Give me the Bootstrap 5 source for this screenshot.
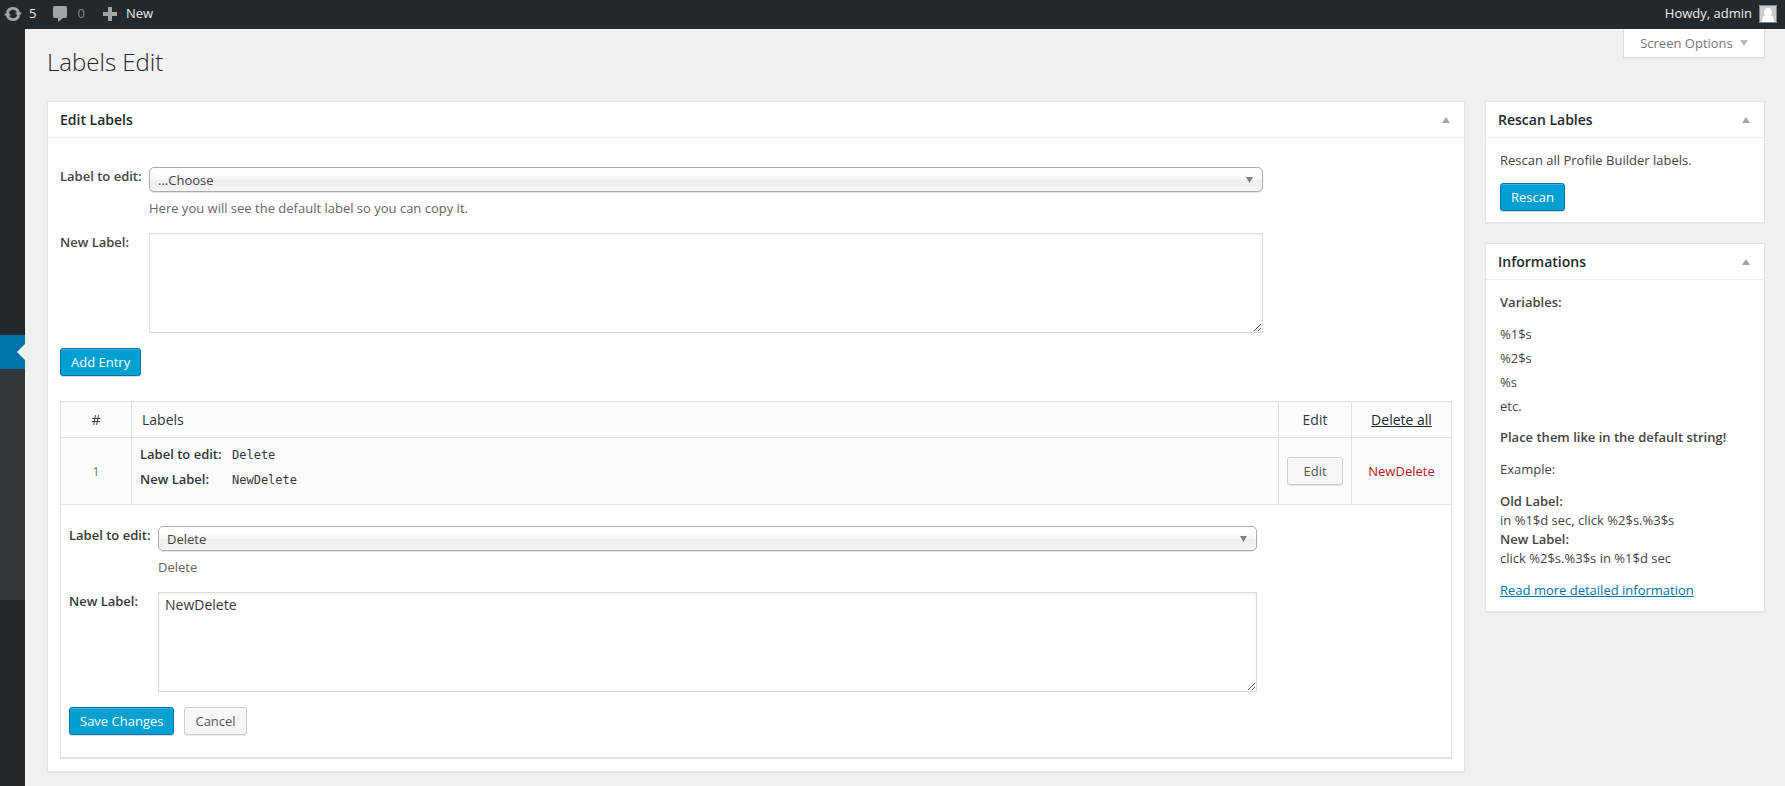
<!DOCTYPE html>
<html lang="en">
<head>
<meta charset="utf-8">
<meta name="viewport" content="width=device-width, initial-scale=1">
<title>Labels Edit</title>
<link href="https://cdn.jsdelivr.net/npm/bootstrap@5.3.0/dist/css/bootstrap.min.css" rel="stylesheet">
<style>
  body { font-family: "Open Sans", sans-serif; font-size: 13px; line-height: 19px; color: #444; background: #f1f1f1; }
  .admin-bar { height: 29px; background: #23282d; padding: 0 8px 2px 4px; gap: 16px; }
  .admin-bar a { color: #eee; text-decoration: none; line-height: 27px; gap: 7px; }
  .admin-bar a.muted { color: #82878c; gap: 9px; }
  .admin-bar svg { fill: #a0a5aa; }
  .avatar { width: 18px; height: 18px; border: 1px solid #82878c; background: #ccc; }
  .side-menu { width: 25px; background: #23282d; padding-top: 306px; }
  .side-menu .current-item { height: 34px; background: #0073aa; }
  .side-menu .current-item::after { content: ""; margin-left: auto; border: 8px solid transparent; border-left: 0; border-right-color: #f1f1f1; }
  .side-menu .sub-items { height: 231px; background: #32373c; }
  .content-area { padding: 0 20px 12px 22px; }
  .page-heading { font-size: 24px; line-height: 29px; font-weight: 300; color: #23282d; padding-top: 18px; }
  .page-top { height: 72px; }
  .screen-options { width: 142px; height: 29px; border: 1px solid #ddd; border-top: 0; background: #fff; color: #777; padding: 0; box-shadow: 0 1px 1px rgba(0,0,0,.04); gap: 7px; }
  .columns { gap: 20px; }
  .side-col { width: 280px; gap: 20px; }
  .postbox { border: 1px solid #e5e5e5; border-radius: 0; box-shadow: 0 1px 1px rgba(0,0,0,.04); color: #444; }
  .postbox > .card-header { background: #fff; border-color: #eee; border-radius: 0; padding: 0 14px 0 12px; height: 36px; }
  .postbox h2 { font-size: 14px; line-height: 20px; font-weight: 600; color: #23282d; }
  .toggle-btn { border: 0; background: none; padding: 0; line-height: 0; }
  .main-body { padding: 29px 12px 12px; }
  .side-body { padding: 13px 14px 11px; }
  .side-body p { margin-bottom: 13px; }
  .side-body li { margin-bottom: 5px; }
  .side-body ul { margin-bottom: 12px; }
  .side-body a { color: #0073aa; }
  b, label, dt { font-weight: 600; }
  .form-line { display: grid; grid-template-columns: 89px 80% 1fr; }
  .form-line label { line-height: 19px; }
  .hint { color: #666; line-height: 19px; margin: 7px 0 15px; }
  .form-line .form-select { height: 25px; padding: 1px 30px 0 8px; font-size: 13px; line-height: 22px; color: #444; border: 1px solid #aaa; border-radius: 5px; box-shadow: 0 0 3px #fff inset, 0 1px 1px rgba(0,0,0,.1);
    background: url("data:image/svg+xml,%3Csvg xmlns='http://www.w3.org/2000/svg' width='7' height='6'%3E%3Cpath d='M0 0h7L3.500 6z' fill='%23808080'/%3E%3C/svg%3E") no-repeat right 9px top 9px, linear-gradient(#fff 20%, #f6f6f6 50%, #eee 52%, #f4f4f4 100%); }
  .form-line .form-control { height: 100px; padding: 2px 6px; font-size: 14px; line-height: 20px; color: #32373c; border: 1px solid #ddd; border-radius: 0; box-shadow: inset 0 1px 2px rgba(0,0,0,.07); }
  .action-row { gap: 10px; margin-top: 15px; }
  .wp-btn { height: 28px; padding: 0 10px; font-size: 13px; line-height: 26px; border-radius: 3px; }
  .wp-btn.btn-primary { background: #00a0d2; border-color: #0073aa; box-shadow: inset 0 1px 0 rgba(120,200,230,.5), 0 1px 0 rgba(0,0,0,.15); }
  .wp-btn.btn-light { background: #f7f7f7; border-color: #ccc; color: #555; box-shadow: inset 0 1px 0 #fff, 0 1px 0 rgba(0,0,0,.08); }
  .edit-btn { width: 56px; }
  .labels-table { margin: 25px 0 0; border: 1px solid #e1e1e1; border-bottom-width: 2px; border-collapse: separate; border-spacing: 0; table-layout: fixed; }
  .labels-table > :not(caption) > * > * { padding: 0; border: 0 solid #e9e9e9; box-shadow: none; background: #fcfcfc; color: #32373c; vertical-align: middle; }
  .labels-table th { height: 36px; font-size: 14px; font-weight: 400; border-bottom: 1px solid #e1e1e1 !important; }
  .labels-table .entry > td { height: 67px; border-bottom: 1px solid #e9e9e9; }
  .labels-table .divided { border-right: 1px solid #e1e1e1 !important; }
  .labels-table .labels-head { padding-left: 10px; }
  .labels-table th a { color: #23282d; }
  .labels-table td.number { color: #777; }
  .col-number { width: 71px; }
  .col-edit { width: 73px; }
  .col-delete { width: 99px; }
  .entry dl { display: grid; grid-template-columns: 92px 1fr; row-gap: 5px; margin: 0; padding: 0 8px 7px; }
  .entry dd { margin: 0; font-family: "DejaVu Sans Mono", monospace; font-size: 12px; line-height: 20px; }
  .entry a { color: #b4161b; text-decoration: none; }
  .labels-table > tbody > tr > td.edit-cell { background: #fff; padding: 21px 8px 22px; }
</style>
<script src="https://cdn.jsdelivr.net/npm/bootstrap@5.3.0/dist/js/bootstrap.bundle.min.js"></script>
</head>
<body class="min-vh-100 d-flex flex-column">
<header class="admin-bar d-flex align-items-center">
  <a href="#" class="d-flex align-items-center"><svg width="18" height="16" viewBox="0 0 18 16"><path d="M2 6C2.800 2.800 5.600 1 9 1c2.600 0 4.700 1.100 6 3l1 2.500h2L14.500 11 11 6.500h2C12.300 4.700 10.900 3.800 9 3.800c-1.500 0-2.700.6-3.400 1.700L4.800 6.500zM16 10c-.8 3.200-3.600 5-7 5-2.600 0-4.700-1.100-6-3L2 9.500H0L3.500 5 7 9.500H5c.7 1.800 2.100 2.700 4 2.700 1.500 0 2.700-.6 3.400-1.700l.8-1z"/></svg>5</a>
  <a href="#" class="muted d-flex align-items-center"><svg width="16" height="16" viewBox="0 0 16 16"><path d="M3 0h10q2 0 2 2v8q0 2-2 2h-2l-5 4v-4H3q-2 0-2-2V2q0-2 2-2z"/></svg>0</a>
  <a href="#" class="d-flex align-items-center"><svg width="18" height="16" viewBox="0 0 18 16"><path d="M7 1h4v5h5v4h-5v5H7v-5H2V6h5z"/></svg>New</a>
  <a href="#" class="d-flex align-items-center ms-auto">Howdy, admin
    <span class="avatar d-flex"><svg width="16" height="16" viewBox="0 0 16 16"><path fill="#fff" d="M8 2c2.300 0 4 1.800 4 4 0 1.400-.6 2.500-1.500 3.300C13 10 14 12 14 16H2c0-4 1-6 3.500-6.700C4.600 8.500 4 7.400 4 6c0-2.200 1.700-4 4-4z"/></svg></span></a>
</header>
<div class="d-flex flex-grow-1">
  <nav class="side-menu flex-shrink-0" aria-label="Main menu">
    <div class="current-item d-flex align-items-center"></div>
    <div class="sub-items"></div>
  </nav>
  <main class="content-area flex-grow-1">
    <div class="page-top d-flex justify-content-between align-items-start">
      <h1 class="page-heading m-0">Labels Edit</h1>
      <button type="button" class="screen-options d-flex align-items-center justify-content-center">Screen Options <svg width="8" height="6" viewBox="0 0 8 6"><path fill="#b4b9be" d="M0 0h8L4 6z"/></svg></button>
    </div>
    <div class="columns d-flex align-items-start">
      <section class="postbox card flex-grow-1">
        <div class="card-header d-flex align-items-center justify-content-between">
          <h2 class="m-0">Edit Labels</h2>
          <button type="button" class="toggle-btn" aria-label="Toggle panel"><svg width="8" height="6" viewBox="0 0 8 6"><path fill="#a0a5aa" d="M0 6h8L4 0z"/></svg></button>
        </div>
        <div class="main-body">
          <form>
            <div class="form-line">
              <label for="pick">Label to edit:</label>
              <div>
                <select id="pick" class="form-select"><option>...Choose</option></select>
                <p class="hint">Here you will see the default label so you can copy it.</p>
              </div>
            </div>
            <div class="form-line">
              <label for="fresh">New Label:</label>
              <textarea id="fresh" class="form-control"></textarea>
            </div>
            <div class="d-flex action-row">
              <button type="button" class="btn btn-primary wp-btn">Add Entry</button>
            </div>
          </form>
          <table class="table labels-table">
            <colgroup><col class="col-number"><col><col class="col-edit"><col class="col-delete"></colgroup>
            <thead>
              <tr><th class="divided text-center">#</th><th class="divided labels-head">Labels</th><th class="divided text-center">Edit</th><th class="text-center"><a href="#">Delete all</a></th></tr>
            </thead>
            <tbody>
              <tr class="entry">
                <td class="divided text-center number">1</td>
                <td class="divided"><dl><dt>Label to edit:</dt><dd>Delete</dd><dt>New Label:</dt><dd>NewDelete</dd></dl></td>
                <td class="divided text-center"><button type="button" class="btn btn-light wp-btn edit-btn">Edit</button></td>
                <td class="text-center"><a href="#">NewDelete</a></td>
              </tr>
              <tr>
                <td colspan="4" class="edit-cell">
                  <form>
                    <div class="form-line">
                      <label for="pick-row">Label to edit:</label>
                      <div>
                        <select id="pick-row" class="form-select"><option>Delete</option></select>
                        <p class="hint">Delete</p>
                      </div>
                    </div>
                    <div class="form-line">
                      <label for="fresh-row">New Label:</label>
                      <textarea id="fresh-row" class="form-control">NewDelete</textarea>
                    </div>
                    <div class="d-flex action-row">
                      <button type="button" class="btn btn-primary wp-btn">Save Changes</button>
                      <button type="button" class="btn btn-light wp-btn">Cancel</button>
                    </div>
                  </form>
                </td>
              </tr>
            </tbody>
          </table>
        </div>
      </section>
      <aside class="side-col flex-shrink-0 d-flex flex-column">
        <section class="postbox card">
          <div class="card-header d-flex align-items-center justify-content-between">
            <h2 class="m-0">Rescan Lables</h2>
            <button type="button" class="toggle-btn" aria-label="Toggle panel"><svg width="8" height="6" viewBox="0 0 8 6"><path fill="#a0a5aa" d="M0 6h8L4 0z"/></svg></button>
          </div>
          <div class="side-body">
            <p>Rescan all Profile Builder labels.</p>
            <button type="button" class="btn btn-primary wp-btn">Rescan</button>
          </div>
        </section>
        <section class="postbox card">
          <div class="card-header d-flex align-items-center justify-content-between">
            <h2 class="m-0">Informations</h2>
            <button type="button" class="toggle-btn" aria-label="Toggle panel"><svg width="8" height="6" viewBox="0 0 8 6"><path fill="#a0a5aa" d="M0 6h8L4 0z"/></svg></button>
          </div>
          <div class="side-body">
            <p><b>Variables:</b></p>
            <ul class="list-unstyled"><li>%1$s</li><li>%2$s</li><li>%s</li><li class="mb-0">etc.</li></ul>
            <p><b>Place them like in the default string!</b></p>
            <p>Example:</p>
            <p><b>Old Label:</b><br>in %1$d sec, click %2$s.%3$s<br><b>New Label:</b><br>click %2$s.%3$s in %1$d sec</p>
            <a href="#">Read more detailed information</a>
          </div>
        </section>
      </aside>
    </div>
  </main>
</div>
</body>
</html>
